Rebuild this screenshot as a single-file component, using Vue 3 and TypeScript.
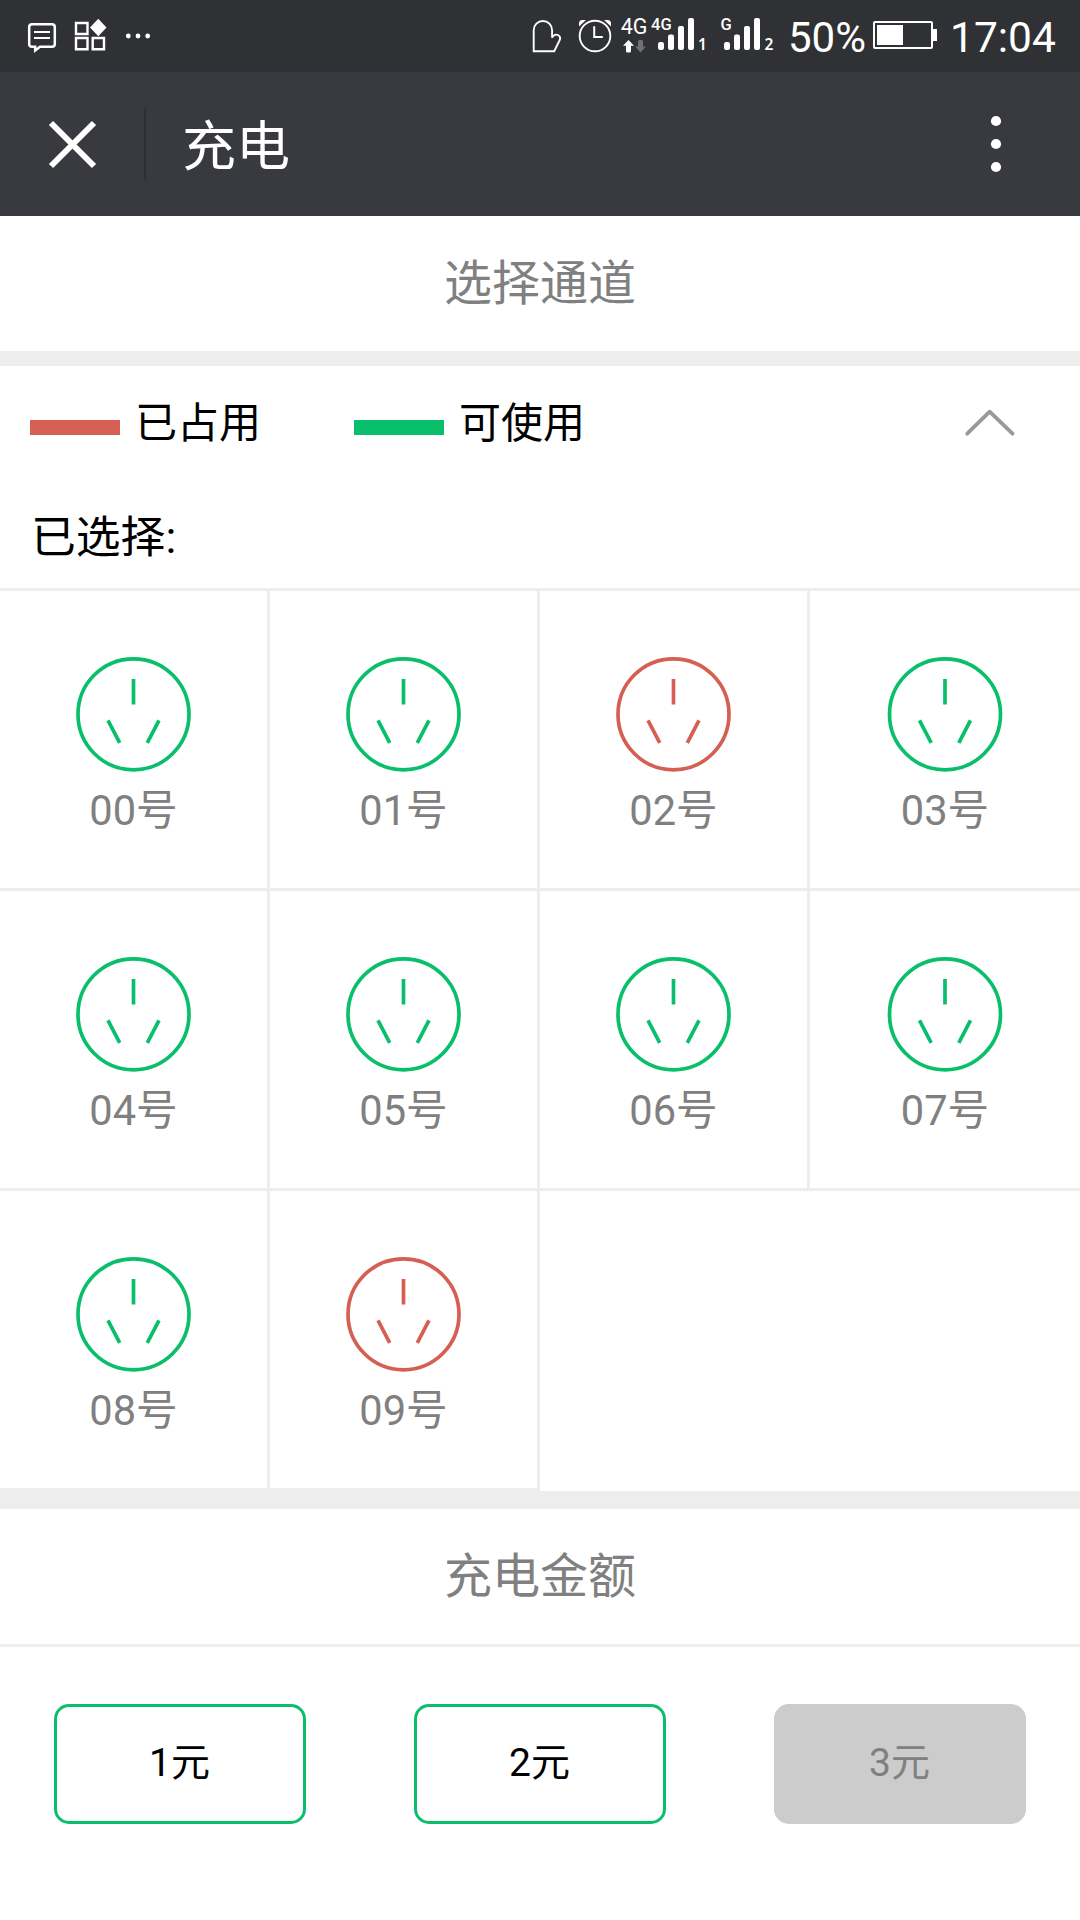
<script setup lang="ts">
interface Channel {
  id: string
  occupied: boolean
}

interface Amount {
  yuan: number
  disabled: boolean
}

const occupiedIds = [2, 9]
const channels: Channel[] = Array.from({ length: 10 }, (_, i) => ({
  id: String(i).padStart(2, '0'),
  occupied: occupiedIds.includes(i),
}))

const amounts: Amount[] = [
  { yuan: 1, disabled: false },
  { yuan: 2, disabled: false },
  { yuan: 3, disabled: true },
]
</script>

<template>
  <div class="screen">
    <div class="status">
      <svg class="status-left" width="170" height="72" viewBox="0 0 170 72" fill="none" stroke="#fff">
        <path d="M32 24.200h20a2.800 2.800 0 0 1 2.800 2.800v17a2.800 2.800 0 0 1-2.800 2.800H40l-4.800 3.700v-3.700H32a2.800 2.800 0 0 1-2.800-2.800V27A2.800 2.800 0 0 1 32 24.200z" stroke-width="2.500" />
        <path d="M34 32h16M34 38h16" stroke-width="2.200" />
        <path d="M76 23h11.500v11H76zM76 38h11.500v11.200H76zM92.700 38h11.300v11.200H92.700z" stroke-width="2.400" />
        <path d="M98.300 18.800l8.200 8.700-8.200 8.700-8.300-8.700z" fill="#fff" stroke="none" />
        <g fill="#fff" stroke="none">
          <circle cx="128.300" cy="36" r="2.400" />
          <circle cx="138" cy="36" r="2.400" />
          <circle cx="147.700" cy="36" r="2.400" />
        </g>
      </svg>
      <svg class="status-right" width="250" height="72" viewBox="530 0 250 72" fill="none" stroke="#fff">
        <path d="M533.700 51.200V30.200a9.200 9.200 0 0 1 18.400 0v7.500c1.500-3 4.200-3.700 6.200-2.500 2 1.200 2.200 3.300 1.200 5.300l-5.300 10.700z" stroke-width="1.900" />
        <circle cx="595" cy="36" r="15.300" stroke-width="1.900" />
        <path d="M594.200 26.300v10.700h8.600" stroke-width="2" />
        <path d="M579 26.500v-3q0-3.500 3.500-3.500h3.500zM611 26.500v-3q0-3.500-3.500-3.500H604z" fill="#fff" stroke="none" />
        <path d="M628.500 40l5.500 5.800h-3V51q0 1.500-1.500 1.500h-2Q626 52.500 626 51v-5.200h-3z" fill="#fff" stroke="none" />
        <path d="M640.500 52.500l5.300-6H643V41.500q0-1.500-1.500-1.500h-2q-1.500 0-1.500 1.500v5h-2.800z" fill="#6f7073" stroke="none" />
        <g fill="#fff" stroke="none">
          <rect x="658" y="42" width="6" height="8" rx="2.200" />
          <rect x="668" y="34.500" width="6" height="15.500" rx="2" />
          <rect x="678" y="26" width="6" height="24" rx="2" />
          <rect x="688" y="18" width="6" height="32" rx="2" />
          <rect x="724" y="42" width="6" height="8" rx="2.200" />
          <rect x="734" y="34.500" width="6" height="15.500" rx="2" />
          <rect x="744" y="26" width="6" height="24" rx="2" />
          <rect x="754" y="18" width="6" height="32" rx="2" />
          <text x="620.700" y="33.700" font-size="21.500">4G</text>
          <text x="651" y="30" font-size="16.500" font-weight="500">4G</text>
          <text x="720.500" y="30" font-size="16.500" font-weight="500">G</text>
          <text class="sim" x="698" y="50" font-size="15.500">1</text>
          <text class="sim" x="764.500" y="50" font-size="15.500">2</text>
        </g>
      </svg>
      <span class="percent">50%</span>
      <svg class="battery" width="66" height="72" viewBox="872 0 66 72">
        <rect x="874" y="22" width="58" height="26" rx="1" fill="none" stroke="#fff" stroke-width="2" />
        <path d="M877 25h26v20h-26zM932 29h5v12h-5z" fill="#fff" />
      </svg>
      <span class="time">17:04</span>
    </div>

    <header class="nav">
      <svg class="close" width="144" height="144" viewBox="0 0 144 144">
        <path d="M51 51l43 43M94 51L51 94" stroke="#fff" stroke-width="6" />
      </svg>
      <i class="divider"></i>
      <h1>充电</h1>
      <svg class="more" width="168" height="144" viewBox="0 0 168 144" fill="#fff">
        <circle cx="84" cy="49" r="5.100" />
        <circle cx="84" cy="72" r="5.100" />
        <circle cx="84" cy="95" r="5.100" />
      </svg>
    </header>

    <h2 class="title">选择通道</h2>

    <section class="channels">
      <div class="legend">
        <div class="legend-item"><i class="bar red"></i><span>已占用</span></div>
        <div class="legend-item"><i class="bar green"></i><span>可使用</span></div>
        <svg class="chevron" width="60" height="60" viewBox="0 0 60 60" fill="none" stroke="#999" stroke-width="3.800" stroke-linecap="round" stroke-linejoin="round">
          <path d="M7.200 40.700L29.700 18.700 52.500 40.700" />
        </svg>
      </div>
      <p class="selected">已选择:</p>
      <div class="grid">
        <div v-for="c in channels" :key="c.id" class="cell" :class="{ occupied: c.occupied }">
          <svg width="120" height="120" viewBox="0 0 120 120" fill="none" stroke="currentColor" stroke-width="3.700">
            <circle cx="60" cy="60.300" r="55.500" />
            <path d="M60 25v25.500M34.500 66.300l11.700 22.500M85.500 66.300L73.800 88.800" />
          </svg>
          <span>{{ c.id }}号</span>
        </div>
      </div>
    </section>

    <h2 class="title amount-title">充电金额</h2>
    <div class="amounts">
      <button v-for="a in amounts" :key="a.yuan" :disabled="a.disabled">{{ a.yuan }}元</button>
    </div>
  </div>
</template>

<style>
body {
  margin: 0;
  background: #fff;
}
</style>

<style scoped>
.screen {
  width: 1080px;
  height: 1920px;
  overflow: hidden;
  background: #fff;
  color: #000;
  font-family: Roboto, "Noto Sans CJK SC", sans-serif;
}
.status {
  display: flex;
  height: 72px;
  background: #303135;
  color: #fff;
  font-size: 42.5px;
  line-height: 76px;
  white-space: nowrap;
}
.status svg {
  flex: none;
}
.status-right {
  margin-left: 360px;
}
.percent {
  width: 84px;
  margin-left: 8px;
  font-size: 42px;
}
.time {
  margin-left: 12px;
}
.sim {
  font-family: "Noto Sans", sans-serif;
  font-weight: 600;
}
.nav {
  display: flex;
  align-items: center;
  height: 144px;
  background: #393a3f;
}
.divider {
  width: 2px;
  height: 72px;
  background: #2e2f33;
}
.nav h1 {
  flex: 1;
  margin: 7px 0 0 36px;
  color: #fff;
  font-size: 54px;
  font-weight: 400;
  line-height: 137px;
}
.title {
  height: 135px;
  margin: 0;
  color: #808080;
  font-size: 48px;
  font-weight: 400;
  line-height: 135px;
  text-align: center;
}
.channels {
  border-top: 15px solid #ededed;
  border-bottom: 18px solid #ededed;
}
.legend {
  display: flex;
  align-items: center;
  height: 114px;
  padding: 0 60px 0 30px;
}
.legend-item {
  display: flex;
  align-items: center;
  width: 324px;
  font-size: 42px;
}
.legend-item span {
  margin-bottom: 7px;
}
.bar {
  width: 90px;
  height: 15px;
  margin: 9px 15px 0 0;
}
.red {
  background: #d55f53;
}
.green {
  background: #0abf6c;
}
.chevron {
  margin-left: auto;
}
.selected {
  height: 108px;
  margin: 0;
  padding-left: 31px;
  font-size: 44.800px;
  line-height: 115px;
}
.grid {
  display: grid;
  grid-template-columns: repeat(4, 270px);
  grid-auto-rows: 300px;
  border-top: 3px solid #ededed;
}
.cell {
  display: flex;
  flex-direction: column;
  align-items: center;
  box-sizing: border-box;
  padding-top: 63px;
  border-right: 3px solid #ededed;
  border-bottom: 3px solid #ededed;
  color: #0abf6c;
}
.cell:nth-child(4n) {
  border-right: 0;
}
.cell.occupied {
  color: #d55f53;
}
.cell svg {
  flex: none;
}
.cell:not(:nth-child(4n)) svg {
  transform: translateX(-0.5px);
}
.cell span {
  margin-top: 6px;
  color: #808080;
  font-size: 41.600px;
  line-height: 62px;
}
.amount-title {
  border-bottom: 3px solid #ededed;
}
.amounts {
  display: flex;
  justify-content: space-between;
  padding: 57px 54px 0;
}
.amounts button {
  box-sizing: border-box;
  width: 252px;
  height: 120px;
  padding: 0 1px 2px 0;
  border: 3px solid #0abf6c;
  border-radius: 15px;
  background: #fff;
  color: #000;
  font: 400 39px/112px Roboto, "Noto Sans CJK SC", sans-serif;
}
.amounts button:disabled {
  border-color: #ccc;
  background: #ccc;
  color: #808080;
}
</style>
